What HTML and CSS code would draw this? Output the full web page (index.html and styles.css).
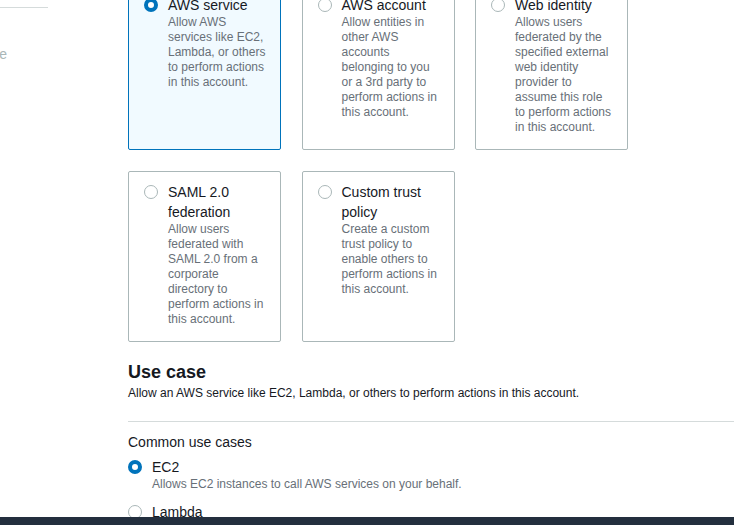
FILE: index.html
```html
<!DOCTYPE html>
<html lang="en">
<head>
<meta charset="utf-8">
<title>Select trusted entity</title>
<link rel="stylesheet" href="styles.css">
</head>
<body>
<div class="layout">
  <aside class="side">
    <div class="side-rule"></div>
    <div class="side-item">Name, review, and create</div>
  </aside>
  <main class="main">
    <div class="tiles">
      <label class="tile selected">
        <span class="radio on"></span>
        <span class="tile-body">
          <span class="tile-title">AWS service</span>
          <span class="tile-desc">Allow AWS services like EC2, Lambda, or others to perform actions in this account.</span>
        </span>
      </label>
      <label class="tile">
        <span class="radio"></span>
        <span class="tile-body">
          <span class="tile-title">AWS account</span>
          <span class="tile-desc">Allow entities in other AWS accounts belonging to you or a 3rd party to perform actions in this account.</span>
        </span>
      </label>
      <label class="tile">
        <span class="radio"></span>
        <span class="tile-body">
          <span class="tile-title">Web identity</span>
          <span class="tile-desc">Allows users federated by the specified external web identity provider to assume this role to perform actions in this account.</span>
        </span>
      </label>
      <label class="tile">
        <span class="radio"></span>
        <span class="tile-body">
          <span class="tile-title">SAML 2.0 federation</span>
          <span class="tile-desc">Allow users federated with SAML 2.0 from a corporate directory to perform actions in this account.</span>
        </span>
      </label>
      <label class="tile">
        <span class="radio"></span>
        <span class="tile-body">
          <span class="tile-title">Custom trust policy</span>
          <span class="tile-desc">Create a custom trust policy to enable others to perform actions in this account.</span>
        </span>
      </label>
    </div>

    <section class="usecase">
      <h2 class="uc-title">Use case</h2>
      <p class="uc-desc">Allow an AWS service like EC2, Lambda, or others to perform actions in this account.</p>
      <div class="uc-rule"></div>
      <div class="uc-label">Common use cases</div>
      <label class="option">
        <span class="radio on"></span>
        <span class="opt-body">
          <span class="opt-title">EC2</span>
          <span class="opt-desc">Allows EC2 instances to call AWS services on your behalf.</span>
        </span>
      </label>
      <label class="option">
        <span class="radio"></span>
        <span class="opt-body">
          <span class="opt-title">Lambda</span>
        </span>
      </label>
    </section>
  </main>
</div>
<div class="footer"></div>
</body>
</html>
```
FILE: styles.css
```css
* { box-sizing: border-box; }
html, body { margin: 0; padding: 0; background: #fff; }
body {
  font-family: "Liberation Sans", Arial, sans-serif;
  color: #16191f;
  overflow: hidden;
  height: 525px;
}
.layout { display: flex; }
.side {
  width: 48px;
  flex-shrink: 0;
  overflow: hidden;
}
.side-rule {
  margin-top: 7px;
  height: 1px;
  background: #d5dbdb;
}
.side-item {
  margin-top: 36px;
  margin-left: -200px;
  width: 207px;
  text-align: right;
  white-space: nowrap;
  font-size: 14px;
  line-height: 20px;
  color: #aab7b8;
}
.main {
  flex: 1;
  margin-left: 80px;
  margin-top: -16px;
  min-width: 0;
}
.tiles {
  display: grid;
  grid-template-columns: repeat(3, 153px);
  column-gap: 20.5px;
  row-gap: 21px;
}
.tile {
  display: flex;
  gap: 10px;
  border: 1px solid #aab7b8;
  border-radius: 2px;
  padding: 10px 12px 14px 15px;
  background: #fff;
}
.tile.selected {
  border-color: #0073bb;
  background: #f1faff;
}
.radio {
  flex-shrink: 0;
  width: 14px;
  height: 14px;
  border-radius: 50%;
  border: 1px solid #aab7b8;
  background: #fff;
  margin-top: 3px;
}
.radio.on {
  border: 4px solid #0073bb;
  background: #fff;
}
.tile-body { display: flex; flex-direction: column; min-width: 0; }
.tile-title {
  font-size: 14px;
  line-height: 20px;
  color: #16191f;
}
.tile-desc {
  font-size: 12px;
  line-height: 15px;
  color: #687078;
}
.usecase { padding-top: 19px; }
.uc-title {
  margin: 0;
  font-size: 18px;
  line-height: 22px;
  font-weight: 700;
  color: #16191f;
}
.uc-desc {
  margin: 3px 0 0;
  font-size: 12px;
  line-height: 15px;
  color: #16191f;
}
.uc-rule {
  margin-top: 20px;
  height: 1px;
  background: #d5dbdb;
}
.uc-label {
  margin-top: 10px;
  font-size: 14px;
  line-height: 20px;
  color: #16191f;
}
.option {
  display: flex;
  gap: 10px;
  margin-top: 5px;
}
.option + .option { margin-top: 10px; }
.opt-body { display: flex; flex-direction: column; }
.opt-title { font-size: 14px; line-height: 20px; }
.opt-desc { font-size: 12px; line-height: 15px; color: #687078; }
.footer {
  position: fixed;
  left: 0;
  right: 0;
  bottom: 0;
  height: 8px;
  background: #232f3e;
}
```
